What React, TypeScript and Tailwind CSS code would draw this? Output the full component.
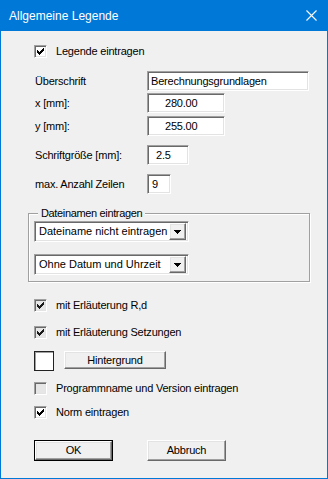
import React from "react";

const sunken =
  "border border-t-[#a0a0a0] border-l-[#a0a0a0] border-b-white border-r-white shadow-[inset_1px_1px_0_#696969,inset_-1px_-1px_0_#e3e3e3]";
const raised =
  "border border-t-white border-l-white border-b-[#696969] border-r-[#696969] shadow-[inset_-1px_-1px_0_#a0a0a0,inset_1px_1px_0_#e3e3e3]";

function CheckMark({ color = "#000" }: { color?: string }) {
  const ys = [2, 3, 4, 3, 2, 1, 0];
  return (
    <svg width="7" height="7" viewBox="0 0 7 7" shapeRendering="crispEdges">
      {ys.map((y, i) => (
        <rect key={i} x={i} y={y} width="1" height="3" fill={color} />
      ))}
    </svg>
  );
}

function CheckBox({ checked, label, gray }: { checked: boolean; label: string; gray?: boolean }) {
  return (
    <div className="flex items-center h-[13px] pl-[33px]">
      <div
        className={`w-[13px] h-[13px] flex items-center justify-center ${sunken} ${
          gray ? "bg-[#e6e6e6]" : "bg-white"
        }`}
      >
        {checked && <CheckMark color={gray ? "#1a1a1a" : "#000"} />}
      </div>
      <span className="ml-[9px] leading-[13px]">{label}</span>
    </div>
  );
}

function Arrow() {
  return (
    <svg width="7" height="4" viewBox="0 0 7 4" shapeRendering="crispEdges">
      <rect x="0" y="0" width="7" height="1" fill="#000" />
      <rect x="1" y="1" width="5" height="1" fill="#000" />
      <rect x="2" y="2" width="3" height="1" fill="#000" />
      <rect x="3" y="3" width="1" height="1" fill="#000" />
    </svg>
  );
}

function Combo({ text }: { text: string }) {
  return (
    <div className={`w-[155px] h-[21px] bg-white flex items-center p-[2px] ${sunken}`}>
      <span className="flex-1 pl-[2px] leading-[17px] tracking-[0px]">{text}</span>
      <div className={`w-[17px] h-[17px] bg-[#f0f0f0] flex items-center justify-center ${raised}`}>
        <Arrow />
      </div>
    </div>
  );
}

function FieldRow({
  label,
  width,
  value,
  pad,
  mt,
}: {
  label: string;
  width: string;
  value: string;
  pad: string;
  mt: string;
}) {
  return (
    <div className={`flex items-center pl-[34px] ${mt}`}>
      <span className="w-[112px]">{label}</span>
      <div className={`${width} h-[20px] bg-white flex items-center ${pad} ${sunken}`}>
        <span className="leading-[16px]">{value}</span>
      </div>
    </div>
  );
}

export default function App() {
  return (
    <div
      className="w-[328px] h-[479px] flex flex-col bg-[#f0f0f0] text-black text-[11px] tracking-[-0.2px]"
      style={{ fontFamily: '"Liberation Sans", Arial, sans-serif' }}
    >
      <div className="h-[31px] bg-[#0078d7] flex items-center justify-between pl-[9px] pr-[11px] text-white text-[12px] tracking-normal shrink-0">
        <span className="mt-[1px]">Allgemeine Legende</span>
        <svg width="11" height="11" viewBox="0 0 11 11">
          <path d="M0.5 0.5 L10.5 10.5 M10.5 0.5 L0.5 10.5" stroke="#fff" strokeWidth="1.1" />
        </svg>
      </div>
      <div className="flex-1 flex flex-col border-x border-b border-[#0078d7]">
        <div className="mt-[14px]">
          <CheckBox checked label="Legende eintragen" />
        </div>

        <FieldRow mt="mt-[13px]" label="Überschrift" width="w-[162px]" value="Berechnungsgrundlagen" pad="pl-[3px]" />
        <FieldRow mt="mt-[2px]" label="x [mm]:" width="w-[78px]" value="280.00" pad="pl-[17px]" />
        <FieldRow mt="mt-[3px]" label="y [mm]:" width="w-[78px]" value="255.00" pad="pl-[17px]" />
        <FieldRow mt="mt-[9px]" label="Schriftgröße [mm]:" width="w-[42px]" value="2.5" pad="pl-[8px]" />
        <FieldRow mt="mt-[9px]" label="max. Anzahl Zeilen" width="w-[24px]" value="9" pad="pl-[4px]" />

        <div className="mt-[19px] ml-[27px] w-[282px] h-[69px] relative border border-[#a0a0a0] shadow-[inset_1px_1px_0_#fff,1px_1px_0_#fff] pl-[5px] pt-[7px]">
          <span className="absolute left-[9px] top-[-8px] px-[3px] bg-[#f0f0f0] leading-[14px] tracking-[-0.35px]">
            Dateinamen eintragen
          </span>
          <Combo text="Dateiname nicht eintragen" />
          <div className="mt-[12px]">
            <Combo text="Ohne Datum und Uhrzeit" />
          </div>
        </div>

        <div className="mt-[17px]">
          <CheckBox checked gray label="mit Erläuterung R,d" />
        </div>
        <div className="mt-[14px]">
          <CheckBox checked gray label="mit Erläuterung Setzungen" />
        </div>

        <div className="mt-[12px] flex items-start pl-[33px]">
          <div className="w-[20px] h-[20px] bg-white border border-[#222] shadow-[inset_1px_1px_0_#a0a0a0]" />
          <div className={`ml-[10px] w-[102px] h-[18px] flex items-center justify-center ${raised}`}>
            Hintergrund
          </div>
        </div>

        <div className="mt-[11px]">
          <CheckBox checked={false} gray label="Programmname und Version eintragen" />
        </div>
        <div className="mt-[11px]">
          <CheckBox checked label="Norm eintragen" />
        </div>

        <div className="mt-[21px] flex pl-[33px]">
          <div className="w-[79px] h-[21px] border border-black">
            <div className={`w-full h-full flex items-center justify-center ${raised}`}>OK</div>
          </div>
          <div className={`ml-[34px] w-[79px] h-[21px] flex items-center justify-center ${raised}`}>
            Abbruch
          </div>
        </div>
      </div>
    </div>
  );
}
